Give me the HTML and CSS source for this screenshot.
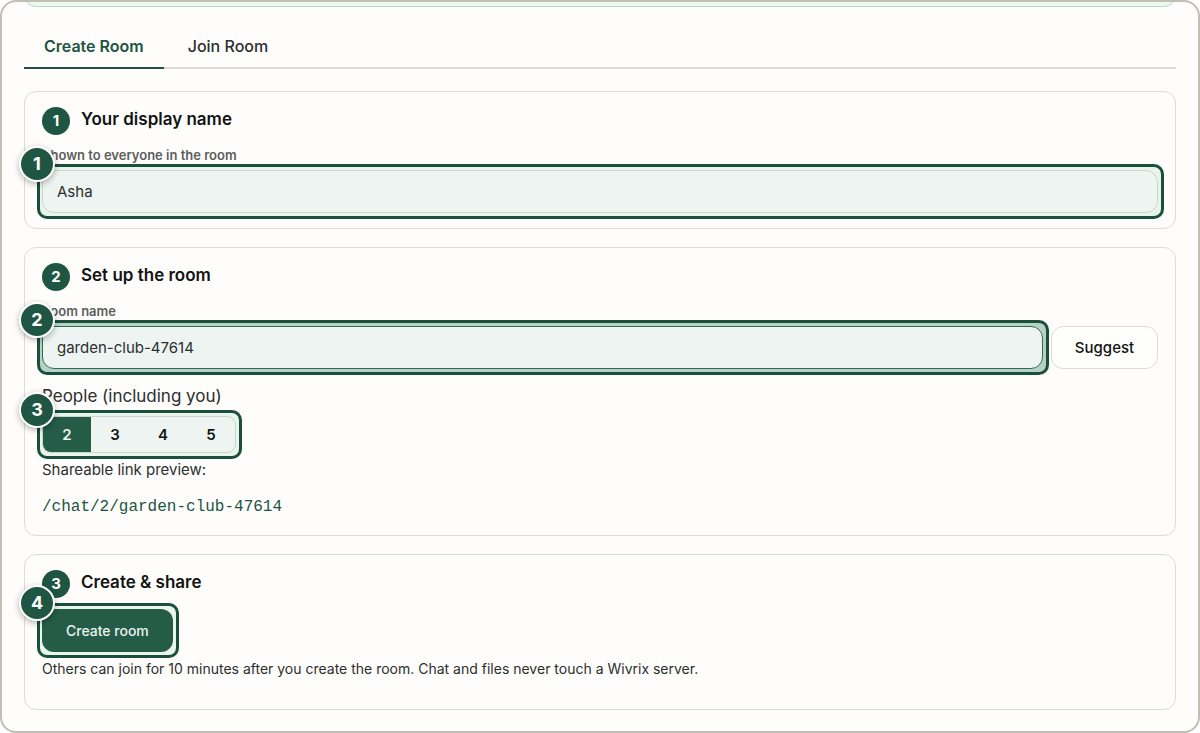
FILE: index.html
```html
<!DOCTYPE html>
<html lang="en">
<head>
    <meta charset="utf-8"/>
    <meta name="viewport" content="width=device-width, initial-scale=1"/>
    <title>Create Room</title>
    <link rel="stylesheet" href="styles.css">
</head>
<body>
    <main class="panel">
        <div class="notice-clip">
            <div class="notice"></div>
        </div>
        <div class="tabs" role="tablist">
            <button type="button" class="tab active" role="tab" aria-selected="true">Create Room</button>
            <button type="button" class="tab" role="tab" aria-selected="false">Join Room</button>
        </div>
        <form class="steps">
            <section class="card">
                <div class="card-head">
                    <span class="step">1</span>
                    <h2>Your display name</h2>
                </div>
                <label class="field-label" for="displayName">Shown to everyone in the room</label>
                <div class="callout">
                    <input type="text" class="input" id="displayName" value="Asha"/>
                    <span class="badge">1</span>
                </div>
            </section>

            <section class="card">
                <div class="card-head">
                    <span class="step">2</span>
                    <h2>Set up the room</h2>
                </div>
                <label class="field-label" for="roomName">Room name</label>
                <div class="room-row">
                    <div class="callout strong">
                        <input type="text" class="input focused" id="roomName" value="garden-club-47614"/>
                        <span class="badge">2</span>
                    </div>
                    <button type="button" class="suggest-btn">Suggest</button>
                </div>
                <p class="people-label" id="peopleLabel">People (including you)</p>
                <div class="callout fit">
                    <div class="segments" role="radiogroup" aria-labelledby="peopleLabel">
                        <label><input type="radio" name="people" value="2" checked/><span>2</span></label>
                        <label><input type="radio" name="people" value="3"/><span>3</span></label>
                        <label><input type="radio" name="people" value="4"/><span>4</span></label>
                        <label><input type="radio" name="people" value="5"/><span>5</span></label>
                    </div>
                    <span class="badge">3</span>
                </div>
                <p class="note">Shareable link preview:</p>
                <code class="link-preview">/chat/2/garden-club-47614</code>
            </section>

            <section class="card last">
                <div class="card-head">
                    <span class="step">3</span>
                    <h2>Create &amp; share</h2>
                </div>
                <div class="callout fit">
                    <button type="submit" class="create-btn">Create room</button>
                    <span class="badge">4</span>
                </div>
                <p class="note small">Others can join for 10 minutes after you create the room. Chat and files never touch a Wivrix server.</p>
            </section>
        </form>
    </main>
</body>
</html>
```
FILE: styles.css
```css
* {
    box-sizing: border-box;
}
body {
    margin: 0;
    background-color: #ffffff;
    color: #2b2f2d;
    font-family: Inter, "Liberation Sans", sans-serif;
    font-size: 15px;
}
button, input {
    font-family: inherit;
}
h2, p {
    margin: 0;
}
.panel {
    min-height: 100vh;
    padding: 0 22px 21px;
    background-color: #fefdfc;
    border: 2px solid #c3beb2;
    border-radius: 16px;
}
/* tail end of the notice scrolled off the top */
.notice-clip {
    display: flex;
    align-items: flex-end;
    height: 5px;
    overflow: hidden;
}
.notice {
    flex: 1;
    height: 40px;
    background-color: #eef7f1;
    border: 1px solid #b3dcc4;
    border-radius: 12px;
}
.tabs {
    display: flex;
    gap: 4px;
    margin: 15px 0 22px;
    border-bottom: 2px solid #dcdcd9;
}
.tab {
    margin-bottom: -2px;
    padding: 12px 20px 9px;
    background: none;
    border: none;
    border-bottom: 2px solid transparent;
    color: #2b2f2d;
    font-size: 16px;
    font-weight: 500;
    line-height: 24px;
    cursor: pointer;
}
.tab.active {
    color: #1c5440;
    border-bottom-color: #1c5440;
    font-weight: 600;
}
.steps {
    display: grid;
    gap: 18px;
}
.card {
    min-width: 0;
    padding: 15px 17px;
    border: 1px solid #dcdcd9;
    border-radius: 12px;
}
.card.last {
    padding-bottom: 28px;
}
.card-head {
    display: flex;
    align-items: flex-start;
    gap: 11px;
    margin-bottom: 11px;
}
.card-head h2 {
    color: #111412;
    font-size: 17px;
    font-weight: 600;
    line-height: 24px;
}
.step {
    width: 28px;
    height: 28px;
    border-radius: 50%;
    background-color: #1f5643;
    color: #ffffff;
    font-size: 15px;
    font-weight: 700;
    line-height: 28px;
    text-align: center;
}
.field-label {
    display: block;
    margin-bottom: 6px;
    color: #5c5f5d;
    font-size: 13px;
    font-weight: 600;
    line-height: 18px;
}
/* ring and number drawn around a control */
.callout {
    position: relative;
}
.callout.fit {
    width: fit-content;
}
.callout::before {
    content: "";
    position: absolute;
    inset: -6px -6px -6px -5px;
    border: 3px solid #1a4f3c;
    border-radius: 10px;
    background-color: #eaf4ef;
}
.callout.strong::before {
    background-color: #b7d1c5;
}
.badge {
    position: absolute;
    top: -24px;
    left: -23px;
    width: 36px;
    height: 36px;
    border: 2px solid #ffffff;
    border-radius: 50%;
    background-color: #1f5643;
    box-shadow: 0 2px 6px rgba(0, 0, 0, 0.3);
    color: #ffffff;
    font-size: 18px;
    font-weight: 700;
    line-height: 32px;
    text-align: center;
}
.input {
    position: relative;
    display: block;
    width: 100%;
    height: 43px;
    padding: 0 14px;
    background-color: #edf4f1;
    border: 1px solid #cdd5d0;
    border-radius: 12px;
    color: #2b2f2d;
    font-size: 15px;
    outline: none;
}
.input.focused {
    border-color: #2f6b55;
}
.room-row {
    display: flex;
    gap: 8px;
}
.room-row .callout {
    flex: 1;
}
.suggest-btn {
    width: 107px;
    height: 43px;
    background-color: #fefefd;
    border: 1px solid #dcdcd9;
    border-radius: 12px;
    color: #111412;
    font-size: 15px;
    font-weight: 500;
    cursor: pointer;
}
.people-label {
    margin: 15px 0 8px;
    font-size: 17px;
    line-height: 24px;
}
.segments {
    position: relative;
    display: flex;
    overflow: hidden;
    background-color: #edf4f1;
    border: 1px solid #cdd5d0;
    border-radius: 9px;
}
.segments input {
    position: absolute;
    opacity: 0;
}
.segments span {
    display: block;
    width: 48px;
    color: #111412;
    font-size: 15px;
    font-weight: 600;
    line-height: 35px;
    text-align: center;
    cursor: pointer;
}
.segments input:checked + span {
    background-color: #255c48;
    color: #eaf4ef;
}
.note {
    margin-top: 5px;
    font-size: 15px;
    line-height: 24px;
}
.note.small {
    font-size: 14px;
}
.link-preview {
    display: block;
    margin-top: 13px;
    color: #1c5440;
    font-family: "Liberation Mono", monospace;
    font-size: 16px;
    line-height: 25px;
}
.create-btn {
    position: relative;
    display: block;
    height: 43px;
    padding: 0 24px;
    background-color: #255c48;
    border: none;
    border-radius: 12px;
    color: #eaf4ef;
    font-size: 14px;
    font-weight: 500;
    cursor: pointer;
}
```
